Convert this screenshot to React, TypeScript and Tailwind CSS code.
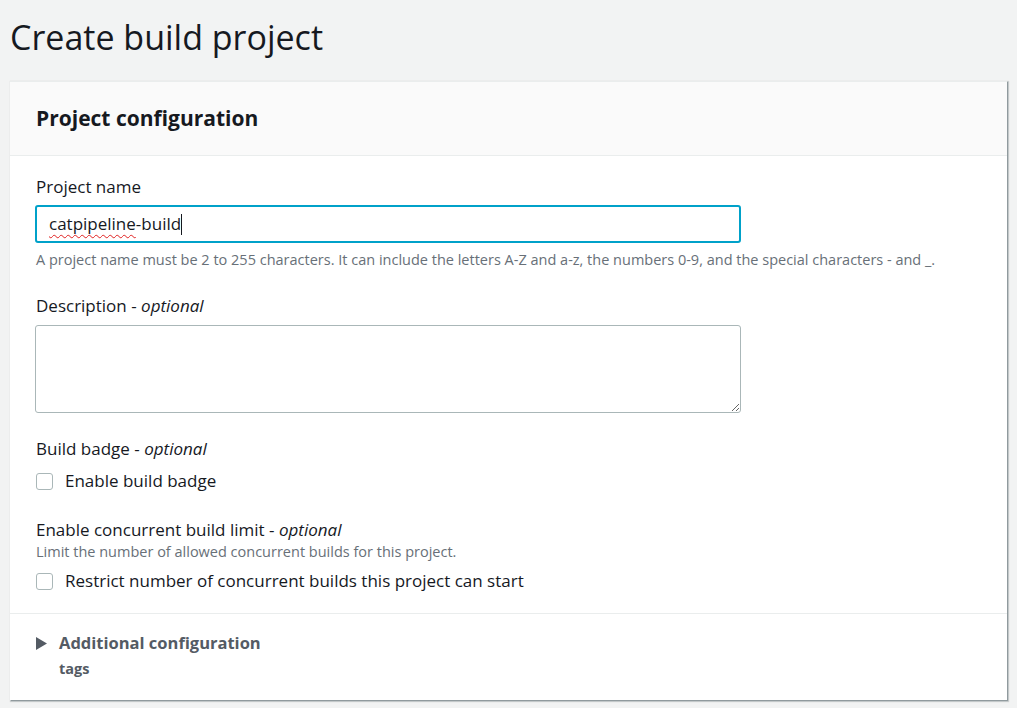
import React, { useState } from 'react';

const font = { fontFamily: '"Open Sans", "Liberation Sans", sans-serif' };

const Checkbox: React.FC<{ label: string }> = ({ label }) => {
  const [checked, setChecked] = useState(false);
  return (
    <label className="flex items-center gap-[12px] cursor-pointer" onClick={() => setChecked(!checked)}>
      <span
        className={`w-[17px] h-[17px] rounded-[3px] border ${checked ? 'bg-[#0073bb] border-[#0073bb]' : 'bg-white border-[#aab7b8]'}`}
      />
      <span className="text-[17px] leading-[22px] text-[#16191f]">{label}</span>
    </label>
  );
};

export default function App() {
  return (
    <div className="min-h-[708px] bg-[#f2f3f3] pb-2" style={font}>
      <h1 className="pl-[10px] pt-[15px] pb-[21px] text-[34px] leading-[45px] text-[#16191f] font-normal">
        Create build project
      </h1>

      <div className="mx-[10px] bg-white border-t border-[#eaeded] shadow-[1px_1px_1px_0_rgba(0,28,36,0.3),1px_1px_1px_1px_rgba(0,28,36,0.15)]">
        {/* Header */}
        <div className="bg-[#fafafa] border-b border-[#eaeded] h-[74px] flex items-center px-[26px]">
          <h2 className="text-[21px] font-bold text-[#16191f]">Project configuration</h2>
        </div>

        {/* Body */}
        <div className="px-[25px] pt-[20px] pb-[21px] flex flex-col">
          <div className="text-[17px] text-[#16191f] leading-[22px] pl-px">Project name</div>
          <div className="mt-[7px] w-[706px] h-[38px] rounded-[3px] border-2 border-[#00a1c9] px-[12px] flex items-center text-[17px] text-[#16191f]">
            <span className="underline decoration-wavy decoration-[#e02020] decoration-1 underline-offset-[4px]">catpipeline</span>
            <span>-build</span>
            <span className="w-px h-[21px] bg-[#16191f]" />
          </div>
          <div className="mt-[7px] text-[14.5px] leading-[19px] text-[#687078] pl-px">
            A project name must be 2 to 255 characters. It can include the letters A-Z and a-z, the numbers 0-9, and the special characters - and _.
          </div>

          <div className="mt-[26px] text-[17px] text-[#16191f] leading-[22px] pl-px">
            Description - <i>optional</i>
          </div>
          <textarea className="mt-[8px] w-[706px] h-[88px] rounded-[3px] border border-[#aab7b8] px-[12px] py-[6px] text-[17px] outline-none" />

          <div className="mt-[25px] text-[17px] text-[#16191f] leading-[22px] pl-px">
            Build badge - <i>optional</i>
          </div>
          <div className="mt-[10px] pl-px">
            <Checkbox label="Enable build badge" />
          </div>

          <div className="mt-[27px] text-[17px] text-[#16191f] leading-[22px] pl-px">
            Enable concurrent build limit - <i>optional</i>
          </div>
          <div className="mt-px text-[14.5px] leading-[20px] text-[#687078] pl-px">
            Limit the number of allowed concurrent builds for this project.
          </div>
          <div className="mt-[8px] pl-px">
            <Checkbox label="Restrict number of concurrent builds this project can start" />
          </div>
        </div>

        {/* Additional configuration */}
        <div className="border-t border-[#eaeded] px-[26px] pt-[17px] pb-[21px]">
          <button className="flex items-center gap-[12px] text-[#545b64]">
            <svg width="11" height="13" viewBox="0 0 11 13">
              <path d="M0 0 L11 6.5 L0 13 Z" fill="#545b64" />
            </svg>
            <span className="text-[16.5px] font-bold">Additional configuration</span>
          </button>
          <div className="pl-[23px] mt-[3px] text-[14.5px] leading-[20px] font-bold text-[#545b64]">tags</div>
        </div>
      </div>
    </div>
  );
}
